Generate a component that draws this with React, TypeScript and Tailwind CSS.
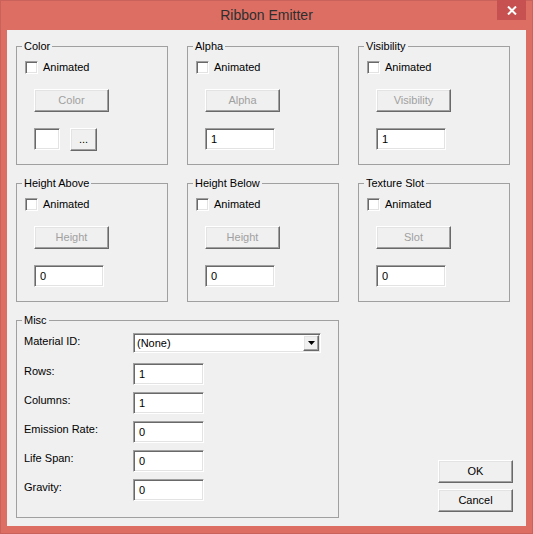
import React from "react";

const sunken =
  "bg-white border border-t-[#a0a0a0] border-l-[#a0a0a0] border-r-white border-b-white shadow-[inset_1px_1px_0_#696969,inset_-1px_-1px_0_#e3e3e3]";
const raised =
  "bg-[#f0f0f0] border border-t-white border-l-white border-r-[#696969] border-b-[#696969] shadow-[inset_-1px_-1px_0_#a0a0a0,inset_1px_1px_0_#e3e3e3]";

function Check() {
  return (
    <div className="flex items-center gap-[5px] pl-[8px] h-[13px]">
      <span className={`w-[13px] h-[13px] ${sunken}`} />
      <span className="leading-[13px]">Animated</span>
    </div>
  );
}

function Btn({ label, disabled, w = 75 }: { label: string; disabled?: boolean; w?: number }) {
  return (
    <div
      className={`h-[23px] flex items-center justify-center ${raised} ${
        disabled ? "text-[#a0a0a0]" : "text-black"
      }`}
      style={{ width: w }}
    >
      {label}
    </div>
  );
}

function Field({ value, w = 70 }: { value: string; w?: number }) {
  return (
    <div className={`h-[22px] flex items-center pl-[5px] ${sunken}`} style={{ width: w }}>
      {value}
    </div>
  );
}

function Group({
  title,
  button,
  value,
  color,
}: {
  title: string;
  button: string;
  value?: string;
  color?: boolean;
}) {
  return (
    <fieldset className="w-[152px] h-[125px] border border-[#a0a0a0]">
      <legend className="ml-[5px] px-[2px] leading-[13px]">{title}</legend>
      <div className="pt-[8px]">
        <Check />
        <div className="mt-[15px] ml-[17px]">
          <Btn label={button} disabled />
        </div>
        <div className="mt-[16px] ml-[17px] flex items-start gap-[10px]">
          {color ? (
            <>
              <span className={`w-[26px] h-[22px] ${sunken}`} />
              <Btn label="..." w={27} />
            </>
          ) : (
            <Field value={value ?? ""} />
          )}
        </div>
      </div>
    </fieldset>
  );
}

function MiscRow({ label, children, first }: { label: string; children: React.ReactNode; first?: boolean }) {
  return (
    <div className={`flex items-start ${first ? "mt-[6px]" : "mt-[7px]"}`}>
      <div className="w-[116px] pl-[7px] pt-[2px] leading-[13px]">{label}</div>
      {children}
    </div>
  );
}

export default function App() {
  return (
    <div className="w-[533px] h-[534px] bg-[#dc6e64] shadow-[inset_0_0_0_1px_#c8625a] relative font-['Liberation_Sans',Arial,sans-serif] text-[11px] text-black">
      <div className="h-[30px] flex items-center justify-center text-[14px] text-[#2e2e2e]">
        Ribbon Emitter
      </div>
      <div className="absolute top-0 right-[7px] w-[29px] h-[20px] bg-[#c75050] flex items-center justify-center">
        <svg width="10" height="9" viewBox="0 0 10 9">
          <path d="M1 0.5 L9 8.5 M9 0.5 L1 8.5" stroke="#fff" strokeWidth="2" />
        </svg>
      </div>
      <div className="mx-[7px] h-[496px] bg-[#f0f0f0] pl-[9px] pt-[10px]">
        <div className="flex gap-[19px]">
          <Group title="Color" button="Color" color />
          <Group title="Alpha" button="Alpha" value="1" />
          <Group title="Visibility" button="Visibility" value="1" />
        </div>
        <div className="flex gap-[19px] mt-[12px]">
          <Group title="Height Above" button="Height" value="0" />
          <Group title="Height Below" button="Height" value="0" />
          <Group title="Texture Slot" button="Slot" value="0" />
        </div>
        <div className="flex mt-[12px]">
          <fieldset className="w-[323px] h-[204px] border border-[#a0a0a0]">
            <legend className="ml-[5px] px-[2px] leading-[13px]">Misc</legend>
            <MiscRow label="Material ID:" first>
              <div className={`w-[188px] h-[20px] flex items-center justify-between pl-[3px] pr-[1px] ${sunken}`}>
                <span>(None)</span>
                <div className={`w-[16px] h-[16px] flex items-center justify-center ${raised}`}>
                  <svg width="7" height="4" viewBox="0 0 7 4">
                    <path d="M0 0 H7 L3.5 4 Z" fill="#000" />
                  </svg>
                </div>
              </div>
            </MiscRow>
            <div className="h-[3px]" />
            <MiscRow label="Rows:">
              <Field value="1" w={71} />
            </MiscRow>
            <MiscRow label="Columns:">
              <Field value="1" w={71} />
            </MiscRow>
            <MiscRow label="Emission Rate:">
              <Field value="0" w={71} />
            </MiscRow>
            <MiscRow label="Life Span:">
              <Field value="0" w={71} />
            </MiscRow>
            <MiscRow label="Gravity:">
              <Field value="0" w={71} />
            </MiscRow>
          </fieldset>
          <div className="ml-auto mr-[13px] self-end mb-[6px] flex flex-col gap-[6px]">
            <Btn label="OK" />
            <Btn label="Cancel" />
          </div>
        </div>
      </div>
    </div>
  );
}
